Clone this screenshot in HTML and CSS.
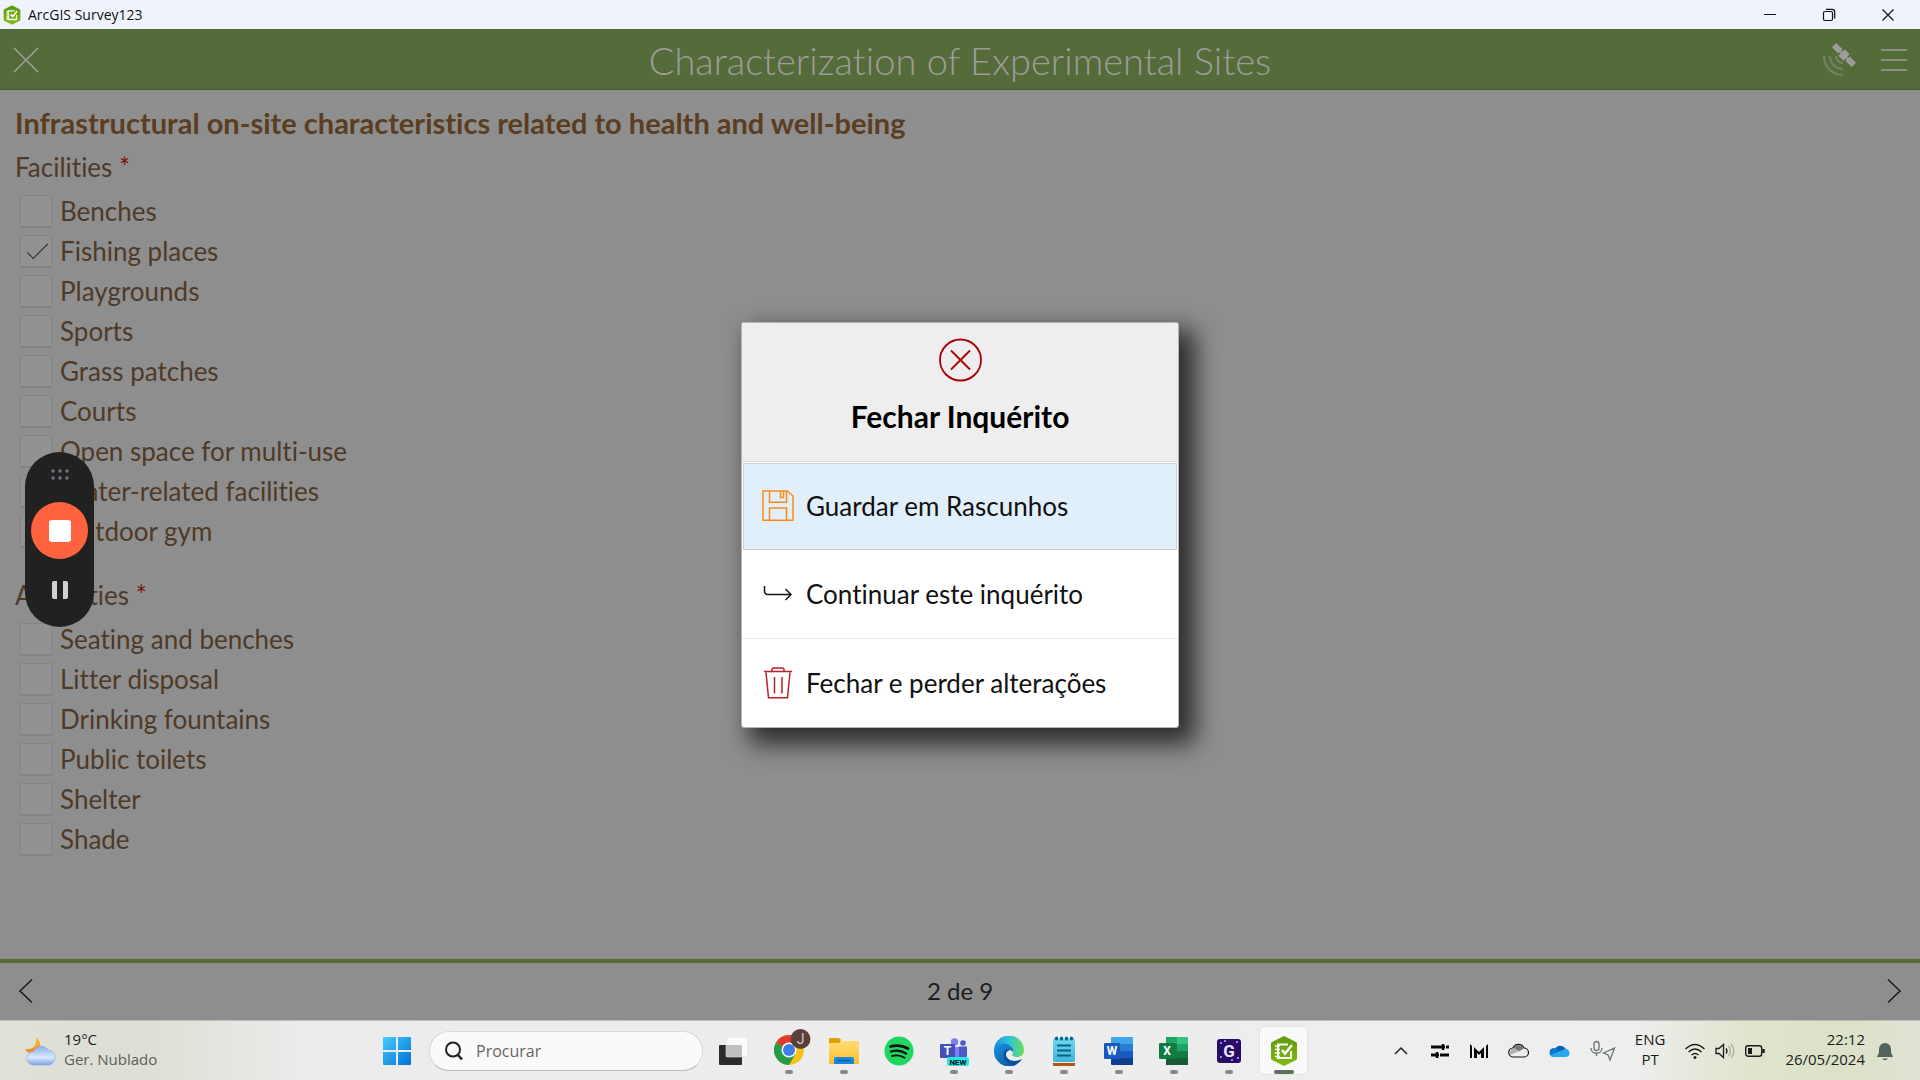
FILE: index.html
```html
<!DOCTYPE html>
<html lang="pt">
<head>
<title>ArcGIS Survey123</title>
<meta charset="UTF-8">
<meta name="viewport" content="width=device-width, initial-scale=1.0">
<link rel="stylesheet" href="styles.css">
</head>
<body>
<svg class="symbols" aria-hidden="true">
<defs>
<linearGradient id="hex-fill" x1="0" y1="0" x2="0" y2="1"><stop offset="0" stop-color="#5c9a0c"/><stop offset="1" stop-color="#82bc10"/></linearGradient>
<linearGradient id="win-fill" x1="0" y1="0" x2="1" y2="1"><stop offset="0" stop-color="#45cdff"/><stop offset="1" stop-color="#0070d6"/></linearGradient>
<linearGradient id="folder-fill" x1="0" y1="0" x2="0" y2="1"><stop offset="0" stop-color="#ffdc72"/><stop offset="1" stop-color="#fbc02f"/></linearGradient>
<linearGradient id="edge-fill" x1="0" y1="0" x2="1" y2="0"><stop offset="0" stop-color="#1c8fdc"/><stop offset=".5" stop-color="#30c2d8"/><stop offset="1" stop-color="#65e35a"/></linearGradient>
<linearGradient id="edge-dark" x1="0" y1="0" x2="1" y2="1"><stop offset="0" stop-color="#1695e0"/><stop offset="1" stop-color="#0c4793"/></linearGradient>
<linearGradient id="note-fill" x1="0" y1="0" x2="0" y2="1"><stop offset="0" stop-color="#74d9f0"/><stop offset="1" stop-color="#3fb3d9"/></linearGradient>
<linearGradient id="cloud-fill" x1="0" y1="0" x2="0" y2="1"><stop offset="0" stop-color="#8bb0ef"/><stop offset=".6" stop-color="#dbe8fb"/><stop offset="1" stop-color="#7ba3e6"/></linearGradient>
<linearGradient id="moon-fill" x1="0" y1="0" x2="0" y2="1"><stop offset="0" stop-color="#fcc13a"/><stop offset="1" stop-color="#f0861c"/></linearGradient>
</defs>
<symbol id="survey" viewBox="0 0 28 30">
<path d="M14 0 26 6a2 2 0 0 1 1 2v14a2 2 0 0 1-1 2l-12 6-12-6a2 2 0 0 1-1-2V8a2 2 0 0 1 1-2z" fill="url(#hex-fill)"/>
<path d="M18 8.500H8v13.500h13v-7" fill="none" stroke="#fff" stroke-width="2"/>
<path d="M12 14l3 3.500L22 9" fill="none" stroke="#fff" stroke-width="2.500"/>
<path d="M5 10h5M5 13.500h5M5 17h5M5 20.500h5" stroke="#fff" stroke-width="1.500"/>
</symbol>
</svg>

<header class="titlebar">
<svg class="titlebar-logo" viewBox="0 0 28 30"><use href="#survey"/></svg>
<span class="titlebar-name">ArcGIS Survey123</span>
<div class="window-buttons">
<button aria-label="Minimizar"><svg width="14" height="14"><path d="M1 6.500h12" stroke="#111"/></svg></button>
<button aria-label="Restaurar"><svg width="14" height="14" fill="none" stroke="#111" stroke-width="1.200"><rect x="1.500" y="3.500" width="9" height="9" rx="1.500"/><path d="M4 1.300h6a2.700 2.700 0 0 1 2.700 2.700v6.500"/></svg></button>
<button aria-label="Fechar"><svg width="14" height="14"><path d="M1.500 1.500l11 11M12.500 1.500l-11 11" stroke="#111" stroke-width="1.200"/></svg></button>
</div>
</header>

<main class="app">
<div class="app-header">
<button class="close-survey" aria-label="Fechar inquérito"><svg width="28" height="28"><path d="M2 2l24 24M26 2L2 26" stroke="#a0a09c" stroke-width="1.500"/></svg></button>
<h1>Characterization of Experimental Sites</h1>
<div class="app-tools">
<button aria-label="Localização"><svg width="34" height="34" fill="none">
<g fill="#9c9d9b" transform="translate(22 12) rotate(45)"><rect x="-14" y="-3" width="9" height="6"/><rect x="-3.500" y="-4.500" width="7" height="9"/><rect x="5" y="-3" width="9" height="6"/><rect x="-6" y="-1" width="12" height="2"/></g>
<path d="M14 13a7 7 0 0 0 7 7M8 13a13 13 0 0 0 13 13M2 13a19 19 0 0 0 19 19" stroke="#748360" stroke-width="2.200"/></svg></button>
<button aria-label="Menu"><svg width="28" height="26"><path d="M1 3h26M1 13h26M1 23h26" stroke="#9c9d99" stroke-width="1.500"/></svg></button>
</div>
</div>

<form class="survey">
<h2>Infrastructural on-site characteristics related to health and well-being</h2>
<fieldset>
<legend>Facilities <b>*</b></legend>
<label><input type="checkbox" name="facilities">Benches</label>
<label><input type="checkbox" name="facilities" checked>Fishing places</label>
<label><input type="checkbox" name="facilities">Playgrounds</label>
<label><input type="checkbox" name="facilities">Sports</label>
<label><input type="checkbox" name="facilities">Grass patches</label>
<label><input type="checkbox" name="facilities">Courts</label>
<label><input type="checkbox" name="facilities">Open space for multi-use</label>
<label><input type="checkbox" name="facilities">Water-related facilities</label>
<label><input type="checkbox" name="facilities">Outdoor gym</label>
</fieldset>
<fieldset>
<legend>Amenities <b>*</b></legend>
<label><input type="checkbox" name="amenities">Seating and benches</label>
<label><input type="checkbox" name="amenities">Litter disposal</label>
<label><input type="checkbox" name="amenities">Drinking fountains</label>
<label><input type="checkbox" name="amenities">Public toilets</label>
<label><input type="checkbox" name="amenities">Shelter</label>
<label><input type="checkbox" name="amenities">Shade</label>
</fieldset>
</form>

<nav class="pager">
<button aria-label="Anterior"><svg width="16" height="26"><path d="M14 1.500L2 13l12 11.500" fill="none" stroke="#1c1c20" stroke-width="1.600"/></svg></button>
<span>2 de 9</span>
<button aria-label="Seguinte"><svg width="16" height="26"><path d="M2 1.500L14 13 2 24.500" fill="none" stroke="#1c1c20" stroke-width="1.600"/></svg></button>
</nav>

<div class="overlay">
<div class="dialog" role="dialog" aria-labelledby="dialog-title">
<div class="dialog-head">
<svg width="44" height="44" fill="none" stroke="#ad0006" stroke-width="1.800"><circle cx="22.500" cy="22" r="20.500"/><path d="M13 12.500l19 19M32 12.500l-19 19"/></svg>
<h2 id="dialog-title">Fechar Inquérito</h2>
</div>
<button class="selected"><svg width="32" height="32" fill="none" stroke="#ff8b14" stroke-width="1.500"><path d="M2 1h23.500L31 6v24.200H1V1zM7.500 1v11.200h17V1M18.500 1.500v6h3v-6M7.500 30V18h17v12"/></svg>Guardar em Rascunhos</button>
<button><svg width="32" height="32" fill="none" stroke="#161616" stroke-width="1.500"><path d="M2.500 8v5q0 3.500 3.500 3.500h23M23.500 11l5.500 5.500-5.500 5.500"/></svg>Continuar este inquérito</button>
<button><svg width="32" height="34" fill="none" stroke="#b8202a" stroke-width="1.500"><path d="M2 5.500h28M10 5V3.500q0-1.500 1.500-1.500h9Q22 2 22 3.500V5M4 6.500l2.500 25.200h19L28 6.500M12.500 11v16.500M20 11v16.500"/></svg>Fechar e perder alterações</button>
</div>
</div>

<div class="recorder">
<svg width="18" height="12" fill="#777283"><circle cx="2" cy="2" r="1.700"/><circle cx="9" cy="2" r="1.700"/><circle cx="16" cy="2" r="1.700"/><circle cx="2" cy="9" r="1.700"/><circle cx="9" cy="9" r="1.700"/><circle cx="16" cy="9" r="1.700"/></svg>
<button class="stop" aria-label="Stop"></button>
<button class="pause" aria-label="Pause"></button>
</div>
</main>

<footer class="taskbar">
<a class="weather" href="#">
<svg width="32" height="30"><path d="M12 1c1 8-2 13-11 12 1 3 4 4 8 4 7 0 11-9 3-16z" fill="url(#moon-fill)"/><path d="M8 29a7 7 0 0 1-1-13c2-1 3 0 3-1a8 8 0 0 1 14-1c5 0 7 4 7 7.500 0 4-3 7.500-7 7.500z" fill="url(#cloud-fill)" stroke="#86a9e8" stroke-width=".6"/></svg>
<span>19°C<small>Ger. Nublado</small></span>
</a>
<nav class="apps">
<button class="start" aria-label="Iniciar"><svg width="30" height="30" fill="url(#win-fill)"><path d="M2 1h12v13H1V2q0-1 1-1zM16 1h12q1 0 1 1v12H16zM1 16h13v13H2q-1 0-1-1zM16 16h13v12q0 1-1 1H16z"/></svg></button>
<label class="search"><svg width="20" height="20" fill="none" stroke="#222" stroke-width="2"><circle cx="9" cy="8.500" r="7"/><path d="M13.500 13.500l4.500 5" stroke-width="2.600"/></svg><input type="text" placeholder="Procurar" aria-label="Procurar"></label>
<button class="task" aria-label="Vista de tarefas"><svg width="30" height="30"><rect x="0" y="9" width="23" height="20" rx="1" fill="#2b2b2b"/><rect x="7" y="1" width="22" height="20" rx="1" fill="#fff" fill-opacity=".7" stroke="#ddd" stroke-width=".6"/></svg></button>
<button class="task open" aria-label="Chrome"><svg class="chrome" width="38" height="38" viewBox="0 0 38 38"><circle cx="15" cy="22" r="15" fill="#fbc318"/><path d="M15 22L2 14.500a15 15 0 0 1 26 0z" fill="#e23b2e"/><path d="M2 14.500a15 15 0 0 0 13 22.500l6.500-11L15 22z" fill="#289b48"/><path d="M15 14.500h13.500L27 13l-12-2z" fill="#e23b2e"/><circle cx="15" cy="22" r="7.500" fill="#fff"/><circle cx="15" cy="22" r="6" fill="#3b7eea"/><circle cx="26.500" cy="11" r="10" fill="#5b4039"/><text x="26.500" y="16" text-anchor="middle" font-size="14" fill="#d6c8c2">J</text></svg></button>
<button class="task open" aria-label="Explorador de ficheiros"><svg width="30" height="30"><path d="M0 3q0-1 1-1h8q2 0 3 2l-2 4H0z" fill="#dda000"/><path d="M0 7h10l3-2h16q1 0 1 1v22H0z" fill="url(#folder-fill)"/><path d="M5 28v-5q0-2 2-2h16q2 0 2 2v5z" fill="#1888dc"/><path d="M9 24.500h12" stroke="#075ba5" stroke-width="1.300"/></svg></button>
<button class="task" aria-label="Spotify"><svg width="30" height="30" fill="none" stroke="#101010" stroke-linecap="round"><circle cx="15" cy="15" r="14.500" fill="#1ed760" stroke="none"/><path d="M6.500 10.500c6-1.500 12-1 17.500 2" stroke-width="2.700"/><path d="M7 15.500c5-1.500 10.500-1 15 2" stroke-width="2.300"/><path d="M8 20c4-1 8.500-.8 12.500 1.700" stroke-width="1.900"/></svg></button>
<button class="task open" aria-label="Teams"><svg width="30" height="30"><circle cx="15.500" cy="6" r="3.700" fill="#7b83eb"/><circle cx="24" cy="7" r="2.800" fill="#5059c9"/><path d="M9 11h12v10q-1 4-6 4t-6-4z" fill="#7b83eb"/><path d="M20 10.500h8v9q-1 4-5 3l-3-1z" fill="#5059c9"/><rect x="1" y="8" width="15" height="14" rx="1" fill="#4650b8"/><text x="8.500" y="19" text-anchor="middle" font-size="12" font-weight="700" fill="#fff">T</text><rect x="8" y="21" width="22" height="9" rx="2" fill="#28e5e6"/><text x="19" y="29" text-anchor="middle" font-size="8" font-weight="700" fill="#111">NEW</text></svg></button>
<button class="task open" aria-label="Edge"><svg width="30" height="30"><path d="M0 15A15 15 0 0 1 30 14c0 5-3 7-7 7-5 0-6-2-4-4 1-6-6-9-11-6-4 2-7 5-8 4z" fill="url(#edge-fill)"/><path d="M0 15C1 8 10 5 16 10c3 2 3.500 4 3 6-2-3-7-2-8 2-1 5 5 9 11 8 3-1 5-2 6-3A15 15 0 0 1 0 15z" fill="url(#edge-dark)"/><path d="M13 13c-5 3-5 10 1 14 4 2 10 1 14-4-6 3-14 3-16-4 0-3 2-5 5-5z" fill="#0b4fa0"/></svg></button>
<button class="task open" aria-label="Bloco de notas"><svg width="30" height="30"><rect x="4" y="26" width="22" height="4" rx="1" fill="#b3560c"/><rect x="4" y="25" width="22" height="2" fill="#eee"/><rect x="4" y="2" width="22" height="24" rx="2" fill="url(#note-fill)"/><path d="M8 9.500h14M8 14.500h14M8 19.500h14" stroke="#08638a" stroke-width="2"/><path d="M7.500 2v1M12.500 2v1M17.500 2v1M22.500 2v1" stroke="#08638a" stroke-width="3" stroke-linecap="round"/></svg></button>
<button class="task open" aria-label="Word"><svg width="30" height="30"><path d="M7 2q0-1 1-1h21v7H7z" fill="#41a5ee"/><path d="M7 8h22v7H7z" fill="#2b7cd3"/><path d="M7 15h22v7H7z" fill="#185abd"/><path d="M7 22h22v7H8q-1 0-1-1z" fill="#103f91"/><rect x="0" y="7" width="16" height="16" rx="1" fill="#185abd"/><text x="8" y="19" text-anchor="middle" font-size="12" font-weight="700" fill="#fff">W</text></svg></button>
<button class="task open" aria-label="Excel"><svg width="30" height="30"><path d="M7 1h11v7H7z" fill="#21a366"/><path d="M18 1h11v7H18z" fill="#33c481"/><path d="M7 8h11v14H7z" fill="#107c41"/><path d="M18 8h11v7H18z" fill="#21a366"/><path d="M18 15h11v7H18z" fill="#107c41"/><path d="M7 22h22v7H7z" fill="#185c37"/><rect x="0" y="7" width="16" height="16" rx="1" fill="#107c41"/><text x="8" y="19" text-anchor="middle" font-size="12" font-weight="700" fill="#fff">X</text></svg></button>
<button class="task open" aria-label="G"><svg width="30" height="30"><rect x="3" y="3" width="24" height="24" rx="3" fill="#260c67"/><path d="M6 7h2M22 6h2M6 21h2M23 22h2M10 5h2M17 24h2" stroke="#a87be8" stroke-width="2"/><text x="15" y="21" text-anchor="middle" font-size="17" font-weight="700" fill="#efe4ff">G</text></svg></button>
<button class="task open active" aria-label="Survey123"><svg width="28" height="30"><use href="#survey"/></svg></button>
</nav>
<div class="tray">
<button aria-label="Mostrar ícones ocultos"><svg width="20" height="20"><path d="M4 13l6-6 6 6" fill="none" stroke="#222" stroke-width="1.500"/></svg></button>
<button aria-label="Definições de som"><svg width="20" height="20"><path d="M1 6h18M1 14h18" stroke="#080808" stroke-width="3"/><path d="M13 3v6M7 11v6" stroke="#080808" stroke-width="2.500"/><path d="M15.500 4v4M9.500 12v4" stroke="#eee"/></svg></button>
<button aria-label="McAfee"><svg width="20" height="20"><path d="M1 3l2 2v12H1zM19 3l-2 2v12h2zM5 6l5 5 5-5v11h-3v-5l-2 2-2-2v5H5z" fill="#080808"/></svg></button>
<button aria-label="Nuvem"><svg width="22" height="20"><path d="M5.500 16a4.500 4.500 0 0 1-.5-9 6 6 0 0 1 11 0 4.500 4.500 0 0 1 0 9z" fill="#eee" stroke="#151515" stroke-width="1.200"/><path d="M5.500 7.500a5.500 5.500 0 0 1 10 0l-4.500 3z" fill="#777"/><path d="M2 14l9-4-5-3Q0 9 2 14z" fill="#b0b0b0"/></svg></button>
<button aria-label="OneDrive"><svg width="22" height="20"><path d="M6 8a6 6 0 0 1 10-1l2 3-6 3z" fill="#0663b5"/><path d="M5 16a4.500 4.500 0 0 1 0-9l10 5-7 4z" fill="#0878d0"/><path d="M5 16c-2 0-3-1-3.500-2L16 8a4 4 0 0 1 1 8z" fill="#28a8ea"/></svg></button>
<button aria-label="Microfone"><svg width="26" height="22" fill="none" stroke="#68756e" stroke-width="1.300"><rect x="4" y="1.500" width="5" height="9" rx="2.500"/><path d="M1 8c0 7 11 7 11 0M6.500 13v3M13.500 13l11-5-4.500 12-2-5z"/></svg></button>
<button class="language">ENG<br>PT</button>
<button class="status" aria-label="Rede, som e bateria">
<svg width="22" height="20" fill="none" stroke="#1c1c1c" stroke-width="1.400"><path d="M1.500 8q9.500-9 19 0M4.500 11q6.500-6 13 0M7.500 14q3.500-3 7 0"/><circle cx="11" cy="16.500" r="1.500" fill="#1c1c1c" stroke="none"/></svg>
<svg width="22" height="20" fill="none" stroke="#1c1c1c" stroke-width="1.300"><path d="M2 7.500h3l4.500-4v13l-4.500-4H2zM12 7.500q2 2.500 0 5"/><path d="M14.500 5q4 5 0 10M17 3q6 7 0 14" stroke="#aab39d"/></svg>
<svg width="22" height="20" fill="none" stroke="#1c1c1c" stroke-width="1.400"><rect x="1.700" y="4.700" width="16" height="10.600" rx="2.500"/><path d="M4 7h4v6H4z" fill="#1c1c1c" stroke="none"/><path d="M19.500 8v4" stroke-width="2.500"/></svg>
</button>
<button class="clock">22:12<br>26/05/2024</button>
<button aria-label="Notificações"><svg width="18" height="20" fill="#52635c"><path d="M1 15.500q2-2 2-5V8a6 6 0 0 1 12 0v2.500q0 3 2 5V16H1zM6 17.500h6q-3 3.500-6 0z"/></svg></button>
</div>
</footer>
</body>
</html>
```
FILE: styles.css
```css
*{
    box-sizing: border-box;
}
body{
    margin: 0;
    min-height: 100vh;
    display: flex;
    flex-direction: column;
    font-family: Lato, sans-serif;
    font-size: 26px;
    font-variant-ligatures: none;
    background: #8e8e8e;
}
button{
    display: flex;
    align-items: center;
    justify-content: center;
    padding: 0;
    border: 0;
    background: none;
    font: inherit;
    font-variant-ligatures: none;
    color: inherit;
    cursor: pointer;
}
h1, h2{
    margin: 0;
}
svg{
    flex-shrink: 0;
    font-family: Roboto, sans-serif;
}
.symbols{
    position: absolute;
    width: 0;
    height: 0;
}

/* window title bar */
.titlebar{
    display: flex;
    align-items: center;
    height: 29px;
    padding-left: 3px;
    background: #f0f3fb;
    color: #111;
    font-family: "Open Sans", sans-serif;
    font-size: 14px;
}
.titlebar-logo{
    width: 18px;
    height: 20px;
    margin-right: 7px;
}
.window-buttons{
    display: flex;
    margin-left: auto;
    padding-right: 3px;
}
.window-buttons button{
    width: 59px;
    height: 29px;
}

/* survey */
.app{
    position: relative;
    flex: 1;
    display: flex;
    flex-direction: column;
}
.app-header{
    display: grid;
    grid-template-columns: 100px 1fr 100px;
    align-items: center;
    height: 61px;
    padding: 2px 12px 0;
    background: #566b3a;
    border-bottom: 1px solid #4b5340;
}
.app-header h1{
    text-align: center;
    font-size: 38px;
    font-weight: 300;
    line-height: 48px;
    color: #9c9d99;
}
.close-survey{
    justify-self: start;
}
.app-tools{
    display: flex;
    justify-content: flex-end;
    align-items: center;
    gap: 24px;
}
.survey{
    flex: 1;
    padding: 15px;
    color: #4f3a28;
}
.survey h2{
    margin-bottom: 8px;
    font-size: 29px;
    line-height: 36px;
    color: #5b3d22;
}
fieldset{
    min-width: 0;
    margin: 0 0 26px;
    padding: 0;
    border: 0;
}
legend{
    padding: 0;
    margin-bottom: 6px;
    line-height: 36px;
}
legend b{
    font-weight: 400;
    color: #7d1212;
}
.survey label{
    display: flex;
    align-items: center;
    width: max-content;
    height: 40px;
    padding-left: 5px;
}
.survey input{
    appearance: none;
    width: 32px;
    height: 33px;
    margin: 0 8px 0 0;
    background: #929292;
    border: 1px solid #848484;
    border-bottom-width: 2px;
}
.survey input:checked::after{
    content: "";
    display: block;
    width: 8px;
    height: 20px;
    margin: 2px 0 0 12px;
    border: solid #20242c;
    border-width: 0 1px 1px 0;
    transform: rotate(45deg);
}
.pager{
    display: flex;
    align-items: center;
    justify-content: space-between;
    height: 61px;
    padding: 0 18px 2px;
    border-top: 4px solid #566b3a;
    color: #1c1c20;
    font-size: 24px;
}

/* close dialog */
.overlay{
    position: absolute;
    inset: 0;
    display: flex;
    align-items: center;
    justify-content: center;
}
.dialog{
    width: 438px;
    background: #fff;
    border: 1px solid #b5b5b5;
    border-radius: 3px;
    box-shadow: 12px 12px 24px 4px #2c2c2e;
    color: #111;
}
.dialog-head{
    display: flex;
    flex-direction: column;
    align-items: center;
    gap: 16px;
    padding: 15px 0 27px;
    background: #eee;
    border-bottom: 1px solid #d8d8d8;
}
.dialog h2{
    font-size: 30px;
    line-height: 36px;
    color: #000;
}
.dialog button{
    justify-content: flex-start;
    gap: 12px;
    width: 100%;
    height: 88px;
    padding-left: 20px;
    border-bottom: 1px solid #eaeaea;
}
.dialog button.selected{
    width: auto;
    min-width: calc(100% - 2px);
    margin: 1px;
    height: 87px;
    padding-left: 18px;
    background: #e1effb;
    border: 1px solid #ccd0d4;
}
.dialog button:last-child{
    border-bottom: 0;
}

/* screen recorder pill */
.recorder{
    position: absolute;
    left: 25px;
    top: 423px;
    display: flex;
    flex-direction: column;
    align-items: center;
    width: 69px;
    height: 175px;
    padding-top: 17px;
    border-radius: 35px;
    background: #212121;
}
.recorder .stop{
    width: 57px;
    height: 57px;
    margin: 21px 0 22px;
    border-radius: 50%;
    background: #ff623e;
}
.stop::before{
    content: "";
    width: 22px;
    height: 22px;
    border-radius: 3px;
    background: #fff;
}
.recorder .pause{
    width: 16px;
    height: 18px;
    border: solid #d2d2d2;
    border-width: 0 5px;
    border-radius: 2px;
}

/* taskbar */
.taskbar{
    display: flex;
    align-items: center;
    height: 60px;
    padding: 0 26px 0 24px;
    border-top: 1px solid #bdbdbb;
    background: linear-gradient(90deg, #dfe0d8, #dde0d5 8%, #ececec 16%, #eee 85%, #dfe4cd 91%, #dbe2c8 96%, #e0e1d4);
    color: #1c1c1c;
    font-family: "Open Sans", sans-serif;
    font-size: 15px;
    line-height: 20px;
}
.weather{
    display: flex;
    align-items: center;
    gap: 8px;
    width: 346px;
    color: inherit;
    text-decoration: none;
}
.weather span, .language, .clock{
    padding-bottom: 4px;
}
.weather small{
    display: block;
    font-size: 15px;
    color: #5c5e5a;
}
.apps{
    display: flex;
    align-items: center;
}
.start{
    width: 54px;
    height: 50px;
}
.search{
    display: flex;
    align-items: center;
    gap: 12px;
    width: 274px;
    height: 40px;
    margin-left: 5px;
    padding-left: 14px;
    background: #fafafa;
    border: 1px solid #d9d9d9;
    border-bottom-color: #bbb;
    border-radius: 20px;
}
.search input{
    width: 200px;
    padding: 0;
    border: 0;
    outline: 0;
    background: none;
    font: inherit;
    font-size: 16px;
}
.search input::placeholder{
    color: #666;
    opacity: 1;
}
.task{
    position: relative;
    width: 49px;
    height: 49px;
    margin-left: 6px;
    border: 1px solid transparent;
    border-radius: 5px;
}
.chrome{
    margin: -8px -8px 0 0;
}
.task.open::after{
    content: "";
    position: absolute;
    bottom: 0;
    width: 8px;
    height: 4px;
    border-radius: 2px;
    background: #888;
}
.task.active{
    background: #f9f9f9;
    border-color: #e2e2e2;
}
.task.active::after{
    width: 20px;
    background: #60705f;
}
.tray{
    display: flex;
    align-items: center;
    gap: 19px;
    margin-left: auto;
}
.language{
    text-align: center;
}
.status{
    gap: 8px;
}
.clock{
    text-align: right;
}
.clock + button{
    margin-left: -8px;
}
```
